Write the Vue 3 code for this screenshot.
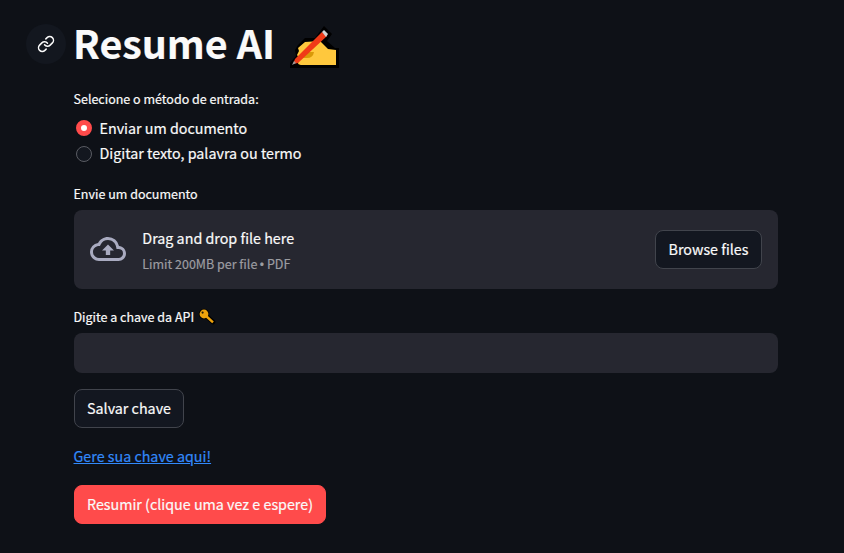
<script setup>
import { ref } from 'vue'

const methods = ['Enviar um documento', 'Digitar texto, palavra ou termo']
const selected = ref(0)
const apiKey = ref('')
</script>

<template>
  <main class="page">
    <header class="heading">
      <a class="anchor" aria-label="Link">
        <svg width="18" height="18" viewBox="0 0 24 24" fill="none" stroke="currentColor" stroke-width="2" stroke-linecap="round" stroke-linejoin="round">
          <path d="M10 13a5 5 0 0 0 7.54.54l3-3a5 5 0 0 0-7.07-7.07l-1.72 1.71" />
          <path d="M14 11a5 5 0 0 0-7.54-.54l-3 3a5 5 0 0 0 7.07 7.07l1.71-1.71" />
        </svg>
      </a>
      <h1>Resume AI</h1>
      <svg class="hand" width="60" height="52" viewBox="0 0 60 52">
        <path d="M6 48V43L12 36L11 30L14 25L21 18H31L40 6L48 14L43 21L51 28H55V48Z" fill="#000" />
        <path d="M14 43L15 38L13 35L15 31L14 28L21 22L36 21L44 29L52 30V45H19Q14 45 14 43Z" fill="#ffc83d" />
        <path d="M23 32H30Q29 38 23 38H17Z" fill="#d99a08" />
        <path d="M38 12L43 16L14 43L9 44L11 39Z" fill="#f03a17" />
        <path d="M38 12L40 10L44 14L42 17Z" fill="#d2d2d2" />
        <path d="M8 45L10 41L12 43Z" fill="#9b9b9b" />
      </svg>
    </header>

    <p class="label method-label">Selecione o método de entrada:</p>
    <div class="radios">
      <div v-for="(m, i) in methods" :key="m" class="radio" @click="selected = i">
        <i class="dot" :class="{ on: selected === i }"></i>
        <span>{{ m }}</span>
      </div>
    </div>

    <p class="label upload-label">Envie um documento</p>
    <section class="uploader">
      <svg class="cloud" width="36" height="36" viewBox="0 0 24 24" fill="currentColor">
        <path d="M19.35 10.04A7.49 7.49 0 0 0 12 4C9.11 4 6.6 5.64 5.35 8.04A5.994 5.994 0 0 0 0 14c0 3.31 2.69 6 6 6h13c2.76 0 5-2.24 5-5 0-2.64-2.05-4.78-4.65-4.96zM19 18H6c-2.21 0-4-1.79-4-4 0-2.05 1.53-3.76 3.56-3.97l1.07-.11.5-.95A5.469 5.469 0 0 1 12 6c2.62 0 4.88 1.86 5.39 4.43l.3 1.5 1.53.11A2.98 2.98 0 0 1 22 15c0 1.65-1.35 3-3 3zM8 13h2.55v3h2.9v-3H16l-4-4z" />
      </svg>
      <div class="drop">
        <span>Drag and drop file here</span>
        <small>Limit 200MB per file <span class="bullet">•</span> PDF</small>
      </div>
      <button class="btn browse">Browse files</button>
    </section>

    <p class="label key-label">
      <span>Digite a chave da API</span>
      <svg class="key" width="18" height="18" viewBox="0 0 18 18">
        <path d="M6 6L15 14" stroke="#000" stroke-width="4.6" stroke-linecap="round" />
        <circle cx="6" cy="6" r="5.2" fill="#000" />
        <path d="M7 7L15 14.3M11.5 12.3l1-1" fill="none" stroke="#eda20c" stroke-width="2.4" />
        <circle cx="6" cy="6" r="4.4" fill="#eda20c" />
        <circle cx="4.6" cy="4.6" r="1.1" fill="#241b08" />
      </svg>
    </p>
    <input v-model="apiKey" class="field" type="text" aria-label="Digite a chave da API" />
    <button class="btn save">Salvar chave</button>
    <a class="link">Gere sua chave aqui!</a>
    <button class="btn primary">Resumir (clique uma vez e espere)</button>
  </main>
</template>

<style>
body {
  background: #0e1117;
}
</style>

<style scoped>
.page {
  box-sizing: border-box;
  height: 553px;
  padding: 18px 66px 0 74px;
  display: flex;
  flex-direction: column;
  align-items: flex-start;
  background: #0e1117;
  color: #fafafa;
  font: 14.3px/24px "Noto Sans CJK SC", "Noto Sans", sans-serif;
  -webkit-text-stroke: 0.2px currentColor;
  white-space: nowrap;
  overflow: hidden;
}
.heading {
  display: flex;
  align-items: center;
  height: 52px;
  margin-left: -48px;
}
.anchor {
  display: flex;
  align-items: center;
  justify-content: center;
  width: 40px;
  height: 40px;
  border-radius: 50%;
  background: #13171f;
}
h1 {
  width: 211px;
  margin: -4px 0 0 7px;
  font-size: 39.4px;
  font-weight: 700;
  line-height: 52px;
}
.hand {
  margin-top: 4px;
}
.label {
  display: flex;
  align-items: center;
  height: 20px;
  margin: 0 0 0 -0.5px;
  font-size: 12.5px;
  line-height: 20px;
}
.method-label {
  margin-top: 19px;
}
.radios {
  display: flex;
  flex-direction: column;
  gap: 1px;
  margin: 7px 0 0.5px;
}
.radio {
  display: flex;
  align-items: center;
  gap: 7.5px;
  height: 24px;
  padding-left: 2px;
}
.radio + .radio .dot {
  margin-top: 1px;
}
.dot {
  box-sizing: border-box;
  width: 16px;
  height: 16px;
  border: 1px solid #5a5c63;
  border-radius: 50%;
  background: #13171f;
}
.dot.on {
  border: 5px solid #ff4b4b;
  background: #fff;
}
.upload-label {
  margin-top: 18px;
}
.uploader {
  box-sizing: border-box;
  display: flex;
  align-items: center;
  width: 704px;
  height: 79px;
  margin-top: 6px;
  padding: 0 16px;
  border-radius: 8px;
  background: #262730;
}
.cloud {
  color: #a9abc0;
}
.drop {
  display: flex;
  flex: 1;
  flex-direction: column;
  align-items: flex-start;
  margin-left: 16.3px;
  padding-top: 1px;
  gap: 3px;
}
small {
  color: #9c9ca1;
  font-size: 12.5px;
  line-height: 21px;
}
.bullet {
  display: inline-block;
  width: 5px;
  margin: 0 -0.5px;
  font: 12px/12px "Liberation Sans", sans-serif;
}
.btn {
  box-sizing: border-box;
  display: flex;
  align-items: center;
  justify-content: center;
  height: 39px;
  padding: 0;
  border: 1px solid #41444c;
  border-radius: 8px;
  background: #131720;
  color: #fafafa;
  font: inherit;
  -webkit-text-stroke: 0.2px currentColor;
}
.browse {
  width: 107px;
}
.key-label {
  margin-top: 18px;
}
.key {
  margin: 1px 0 0 3.5px;
}
.field {
  box-sizing: border-box;
  width: 704px;
  height: 40px;
  margin-top: 6px;
  padding: 0 12px;
  border: 0;
  border-radius: 8px;
  outline: 0;
  background: #262730;
  color: #fafafa;
  font: inherit;
}
.save {
  width: 110px;
  margin-top: 16px;
}
.link {
  margin: 16px 0 0 -0.5px;
  color: #3289fa;
  text-decoration: underline;
}
.primary {
  width: 252px;
  margin-top: 17px;
  border-color: #ff4b4b;
  background: #ff4b4b;
}
</style>
